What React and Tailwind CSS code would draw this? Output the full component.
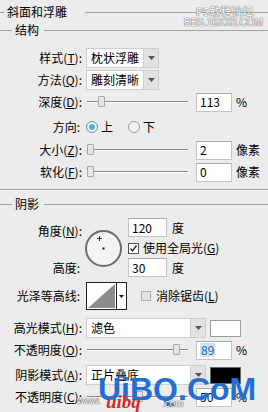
const font = { fontFamily: '"Noto Sans CJK SC", "Noto Sans", sans-serif' };

function Label({ children, className = "" }) {
  return (
    <div className={`w-[82px] shrink-0 text-right whitespace-nowrap ${className}`}>
      {children}
    </div>
  );
}

function Arrow() {
  return (
    <div className="w-[15px] h-full shrink-0 bg-[#e2e2e2] border-l border-[#d0d0d0] flex items-center justify-center">
      <svg width="7" height="4" viewBox="0 0 7 4">
        <path d="M0 0h7L3.5 4z" fill="#555" />
      </svg>
    </div>
  );
}

function Dropdown({ text, w }) {
  return (
    <div className={`${w} h-[20px] bg-white border border-[#cfcfcf] flex items-center`}>
      <span className="flex-1 pl-[4px] whitespace-nowrap leading-[18px]">{text}</span>
      <Arrow />
    </div>
  );
}

function Slider({ pos }) {
  return (
    <div className="relative w-[104px] h-[22px] flex items-center">
      <div className="ml-[1px] w-[101px] h-[2px] border-t border-[#8a8a8a] border-b border-b-white" />
      <div
        className="absolute top-[5px] w-[7px] h-[11px] bg-[#e6e6e6] border border-[#a8a8a8] rounded-[1px]"
        style={{ left: pos }}
      />
    </div>
  );
}

function Input({ value, w = "w-[36px]", hl }) {
  return (
    <div
      className={`${w} h-[19px] bg-white border border-[#c4c4c4] border-t-[#a8a8a8] flex items-center pl-[3px]`}
    >
      <span className={hl ? "bg-[#cfe5f6] text-[#2a62b0] px-[1px] leading-[14px]" : ""}>{value}</span>
    </div>
  );
}

function SliderRow({ label, pos, value, unit, hl }) {
  return (
    <div className="h-[22px] flex items-center">
      <Label>{label}</Label>
      <div className="ml-[4px]">
        <Slider pos={pos} />
      </div>
      <div className="ml-[6px]">
        <Input value={value} hl={hl} />
      </div>
      <span className="ml-[4px]">{unit}</span>
    </div>
  );
}

function Radio({ on }) {
  return (
    <div
      className={`w-[12px] h-[12px] rounded-full border ${on ? "border-[#6a8fb0] bg-[#eef6fb]" : "border-[#9a9a9a] bg-[#f2f2f2]"} flex items-center justify-center`}
    >
      {on && <div className="w-[6px] h-[6px] rounded-full bg-[#58b0d8]" />}
    </div>
  );
}

function Header({ text, pre, gap, className = "" }) {
  return (
    <div className={`flex items-center ${className}`}>
      <div className={`${pre} h-[1px] bg-[#a3a3a3]`} />
      <span className="ml-[3px] whitespace-nowrap">{text}</span>
      <div className={`${gap} flex-1 h-[1px] bg-[#a3a3a3]`} />
    </div>
  );
}

export default function App() {
  return (
    <div
      className="relative w-[268px] h-[412px] bg-[#ececec] text-black text-[12px] leading-none overflow-hidden"
      style={font}
    >
      <Header text="斜面和浮雕" pre="w-[4px]" gap="ml-[18px]" className="h-[24px]" />
      <Header text="结构" pre="w-[12px]" gap="ml-[5px]" className="h-[12px]" />

      <div className="mt-[11px] h-[22px] flex items-center">
        <Label>
          样式(<u>T</u>):
        </Label>
        <div className="ml-[4px]">
          <Dropdown text="枕状浮雕" w="w-[73px]" />
        </div>
      </div>
      <div className="h-[22px] flex items-center">
        <Label>
          方法(<u>Q</u>):
        </Label>
        <div className="ml-[4px]">
          <Dropdown text="雕刻清晰" w="w-[73px]" />
        </div>
      </div>
      <SliderRow label={<>深度(<u>D</u>):</>} pos={12} value="113" unit="%" />

      <div className="mt-[3px] h-[22px] flex items-center">
        <Label className="pr-[2px]">方向:</Label>
        <div className="ml-[4px] flex items-center">
          <Radio on />
          <span className="ml-[3px]">上</span>
          <div className="ml-[15px]">
            <Radio />
          </div>
          <span className="ml-[3px]">下</span>
        </div>
      </div>
      <div className="mt-[1px]">
        <SliderRow label={<>大小(<u>Z</u>):</>} pos={1} value="2" unit="像素" />
      </div>
      <SliderRow label={<>软化(<u>F</u>):</>} pos={1} value="0" unit="像素" />

      <div className="mt-[6px] h-[2px] border-t border-[#a3a3a3] border-b border-b-white" />
      <Header text="阴影" pre="w-[12px]" gap="ml-[5px]" className="mt-[7px] h-[12px]" />

      <div className="mt-[8px] h-[59px] flex">
        <div className="w-[82px] flex flex-col justify-between">
          <Label className="mt-[3px] h-[19px] flex items-center justify-end">
            角度(<u>N</u>):
          </Label>
          <Label className="h-[19px] flex items-center justify-end pr-[2px]">高度:</Label>
        </div>
        <div className="w-[46px] pl-[3px] pt-[12px]">
          <div className="w-[37px] h-[37px] rounded-full border-2 border-[#6c6c6c] bg-[#f3f3f3]">
            <svg width="33" height="33" viewBox="0 0 33 33">
              <path d="M12.5 4v5M10 6.5h5" stroke="#333" strokeWidth="1" />
              <rect x="15.5" y="15.5" width="2" height="2" fill="#111" />
            </svg>
          </div>
        </div>
        <div className="flex flex-col">
          <div className="flex items-center">
            <Input value="120" w="w-[39px]" />
            <span className="ml-[5px]">度</span>
          </div>
          <div className="mt-[3px] h-[16px] flex items-center">
            <div className="w-[11px] h-[11px] border border-[#555] bg-white flex items-center justify-center">
              <svg width="9" height="9" viewBox="0 0 9 9">
                <path d="M1.5 4.5l2 2.5 4-5.5" fill="none" stroke="#222" strokeWidth="1.3" />
              </svg>
            </div>
            <span className="ml-[4px] whitespace-nowrap">
              使用全局光(<u>G</u>)
            </span>
          </div>
          <div className="mt-[2px] flex items-center">
            <Input value="30" w="w-[39px]" />
            <span className="ml-[5px]">度</span>
          </div>
        </div>
      </div>

      <div className="mt-[5px] h-[28px] flex items-center">
        <Label className="pr-[2px]">光泽等高线:</Label>
        <div className="ml-[4px] w-[41px] h-[28px] border border-[#222] bg-white flex">
          <svg width="29" height="26" viewBox="0 0 29 26" className="shrink-0">
            <path d="M1 25L28 1V25z" fill="#8c8c8c" />
          </svg>
          <div className="flex-1 border-l border-[#222] flex items-center justify-center">
            <svg width="5" height="3" viewBox="0 0 5 3">
              <path d="M0 0h5L2.5 3z" fill="#111" />
            </svg>
          </div>
        </div>
        <div className="ml-[14px] w-[10px] h-[10px] border border-[#b0b0b0] bg-[#e2e2e2]" />
        <span className="ml-[5px] whitespace-nowrap">
          消除锯齿(<u>L</u>)
        </span>
      </div>

      <div className="mt-[7px] h-[22px] flex items-center">
        <Label>
          高光模式(<u>H</u>):
        </Label>
        <div className="ml-[4px]">
          <Dropdown text="滤色" w="w-[120px]" />
        </div>
        <div className="ml-[4px] w-[31px] h-[17px] bg-white border border-[#9a9a9a]" />
      </div>
      <SliderRow label={<>不透明度(<u>O</u>):</>} pos={87} value="89" unit="%" hl />

      <div className="mt-[3px] h-[22px] flex items-center">
        <Label>
          阴影模式(<u>A</u>):
        </Label>
        <div className="ml-[4px]">
          <Dropdown text="正片叠底" w="w-[120px]" />
        </div>
        <div className="ml-[4px] w-[31px] h-[17px] bg-black border border-[#666]" />
      </div>
      <SliderRow label={<>不透明度(<u>C</u>):</>} pos={50} value="50" unit="%" />

      {/* watermarks */}
      <div className="absolute left-[196px] top-[6px] text-[11px] text-white whitespace-nowrap [text-shadow:0_0_1px_#555,0_0_1px_#555]">
        PS教程论坛
      </div>
      <div
        className="absolute left-[184px] top-[18px] text-[10px] text-white whitespace-nowrap [text-shadow:0_0_1px_#555,0_0_1px_#555]"
        style={{ fontFamily: '"Liberation Sans", sans-serif' }}
      >
        BBS.16XX8.COM
      </div>
      <div
        className="absolute left-[98px] top-[373px] text-[32px] leading-[32px] font-bold text-[#1f6fd6] whitespace-nowrap"
        style={{ fontFamily: '"Liberation Sans", sans-serif' }}
      >
        UiBQ.CoM
      </div>
      <div
        className="absolute left-[77px] top-[396px] text-[10px] text-white whitespace-nowrap [text-shadow:0_0_1px_#444,0_0_1px_#444]"
        style={{ fontFamily: '"Liberation Sans", sans-serif' }}
      >
        www.
      </div>
      <div
        className="absolute left-[106px] top-[392px] text-[19px] leading-[19px] italic font-bold text-[#d42a2a] whitespace-nowrap"
        style={{ fontFamily: '"Liberation Serif", serif' }}
      >
        uibq
      </div>
      <div
        className="absolute left-[162px] top-[399px] text-[10px] text-white whitespace-nowrap [text-shadow:0_0_1px_#444,0_0_1px_#444]"
        style={{ fontFamily: '"Liberation Sans", sans-serif' }}
      >
        .com
      </div>
    </div>
  );
}
